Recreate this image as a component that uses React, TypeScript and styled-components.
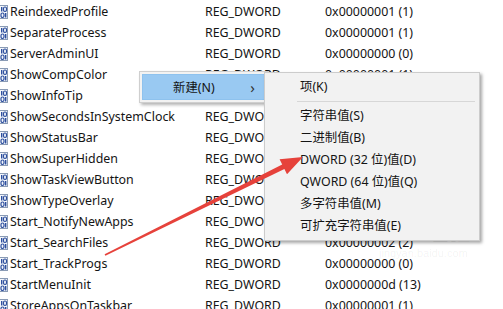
import React from "react";
import styled, { createGlobalStyle } from "styled-components";

const GlobalStyle = createGlobalStyle`
  html, body {
    margin: 0;
    padding: 0;
    background: #ffffff;
    overflow: hidden;
  }
`;

type RegValue = { name: string; data: string };

const values: RegValue[] = [
  { name: "ReindexedProfile", data: "0x00000001 (1)" },
  { name: "SeparateProcess", data: "0x00000001 (1)" },
  { name: "ServerAdminUI", data: "0x00000000 (0)" },
  { name: "ShowCompColor", data: "0x00000001 (1)" },
  { name: "ShowInfoTip", data: "0x00000001 (1)" },
  { name: "ShowSecondsInSystemClock", data: "0x00000001 (1)" },
  { name: "ShowStatusBar", data: "0x00000001 (1)" },
  { name: "ShowSuperHidden", data: "0x00000000 (0)" },
  { name: "ShowTaskViewButton", data: "0x00000001 (1)" },
  { name: "ShowTypeOverlay", data: "0x00000001 (1)" },
  { name: "Start_NotifyNewApps", data: "0x00000001 (1)" },
  { name: "Start_SearchFiles", data: "0x00000002 (2)" },
  { name: "Start_TrackProgs", data: "0x00000000 (0)" },
  { name: "StartMenuInit", data: "0x0000000d (13)" },
  { name: "StoreAppsOnTaskbar", data: "0x00000001 (1)" },
];

const subItems = [
  "字符串值(S)",
  "二进制值(B)",
  "DWORD (32 位)值(D)",
  "QWORD (64 位)值(Q)",
  "多字符串值(M)",
  "可扩充字符串值(E)",
];

// registry dword icon, only its right half is in view
const DwordIcon = () => (
  <svg width="9" height="14" viewBox="7 1 9 14">
    <rect x="1.5" y="1.5" width="13" height="13" fill="#f4f7fb" stroke="#8a9bb5" />
    <rect x="8" y="3" width="1.4" height="4.5" fill="#2d4f9e" />
    <rect x="10.5" y="3" width="3" height="4.5" rx="1.4" fill="none" stroke="#2d4f9e" strokeWidth="1.2" />
    <rect x="8" y="9" width="3" height="4.5" rx="1.4" fill="none" stroke="#2d4f9e" strokeWidth="1.2" />
    <rect x="12" y="9" width="1.4" height="4.5" fill="#2d4f9e" />
  </svg>
);

export default function App() {
  return (
    <Page>
      <GlobalStyle />
      <List>
        {values.map((v) => (
          <Row key={v.name}>
            <IconCell>
              <DwordIcon />
            </IconCell>
            <Cell>{v.name}</Cell>
            <Cell>REG_DWORD</Cell>
            <Cell>{v.data}</Cell>
          </Row>
        ))}
      </List>

      <Watermark>
        <WmLogo>Bai<WmDu>du</WmDu> 经验</WmLogo>
        <WmUrl>jingyan.baidu.com</WmUrl>
      </Watermark>

      <ContextMenu>
        <HotItem>
          <span>新建(N)</span>
          <Chevron>›</Chevron>
        </HotItem>
      </ContextMenu>

      <SubMenu>
        <MenuItem>项(K)</MenuItem>
        <Separator />
        {subItems.map((t) => (
          <MenuItem key={t}>{t}</MenuItem>
        ))}
      </SubMenu>

      <ArrowLayer width="503" height="309" viewBox="0 0 503 309">
        <polygon
          points="104.6,254.3 282.2,164.5 279.6,159.2 303,157 287,174.2 284.4,168.9 105.4,255.7"
          fill="#e6423b"
        />
      </ArrowLayer>
    </Page>
  );
}

const Page = styled.div`
  position: relative;
  width: 503px;
  height: 309px;
  overflow: hidden;
  background: #ffffff;
  font-family: "Noto Sans", "Noto Sans CJK SC", sans-serif;
  font-size: 12.4px;
  color: #141414;
`;

const List = styled.div`
  display: flex;
  flex-direction: column;
  padding-top: 1px;
`;

const Row = styled.div`
  display: grid;
  grid-template-columns: 10px 195px 120px 1fr;
  align-items: center;
  height: 21px;
  white-space: nowrap;
`;

const IconCell = styled.div`
  display: flex;
  align-items: center;
`;

const Cell = styled.div`
  line-height: 21px;
`;

const Watermark = styled.div`
  position: absolute;
  left: 355px;
  top: 212px;
  display: flex;
  flex-direction: column;
  align-items: flex-start;
  color: rgba(0, 0, 0, 0.06);
  font-family: "Liberation Sans", "Noto Sans CJK SC", sans-serif;
`;

const WmLogo = styled.div`
  font-size: 24px;
  font-weight: 700;
  letter-spacing: -1px;
`;

const WmDu = styled.span`
  margin-left: 2px;
`;

const WmUrl = styled.div`
  font-size: 11px;
  margin-left: 24px;
`;

const ContextMenu = styled.div`
  position: absolute;
  left: 139px;
  top: 71px;
  width: 124px;
  padding: 2px;
  background: #f2f2f2;
  border: 1px solid #cfcfcf;
  box-shadow: 2px 2px 3px rgba(0, 0, 0, 0.3);
`;

const HotItem = styled.div`
  display: flex;
  align-items: center;
  justify-content: space-between;
  height: 24px;
  padding: 0 10px 0 30px;
  background: #99c9f2;
  border: 1px solid #8ec2ee;
`;

const Chevron = styled.span`
  font-size: 15px;
  color: #333;
`;

const SubMenu = styled.div`
  position: absolute;
  left: 264px;
  top: 72px;
  width: 210px;
  padding: 3px 2px;
  background: #f2f2f2;
  border: 1px solid #cccccc;
  box-shadow: 2px 2px 3px rgba(0, 0, 0, 0.35);
  display: flex;
  flex-direction: column;
`;

const MenuItem = styled.div`
  height: 22px;
  line-height: 22px;
  padding-left: 33px;
  white-space: nowrap;
`;

const Separator = styled.div`
  height: 1px;
  margin: 3px 2px 3px 30px;
  background: #d7d7d7;
`;

const ArrowLayer = styled.svg`
  position: absolute;
  left: 0;
  top: 0;
  pointer-events: none;
`;
